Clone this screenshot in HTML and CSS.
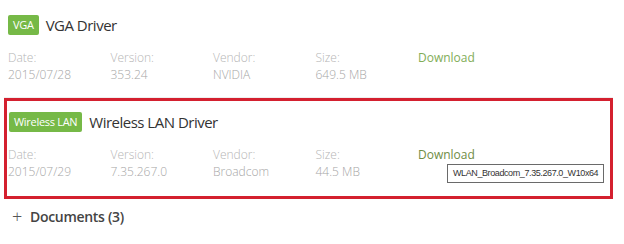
FILE: index.html
```html
<!DOCTYPE html>
<html>
<head>
<meta charset="utf-8">
<link rel="stylesheet" href="styles.css">
</head>
<body>
<div class="page">
  <div class="driver">
    <div class="head">
      <span class="badge">VGA</span>
      <span class="title">VGA Driver</span>
    </div>
    <div class="info">
      <div class="col"><div class="label">Date:</div><div class="value">2015/07/28</div></div>
      <div class="col"><div class="label">Version:</div><div class="value">353.24</div></div>
      <div class="col"><div class="label">Vendor:</div><div class="value">NVIDIA</div></div>
      <div class="col"><div class="label">Size:</div><div class="value">649.5 MB</div></div>
      <div class="col"><a class="download">Download</a></div>
    </div>
  </div>
  <div class="driver highlight">
    <div class="head">
      <span class="badge">Wireless LAN</span>
      <span class="title">Wireless LAN Driver</span>
    </div>
    <div class="info">
      <div class="col"><div class="label">Date:</div><div class="value">2015/07/29</div></div>
      <div class="col"><div class="label">Version:</div><div class="value">7.35.267.0</div></div>
      <div class="col"><div class="label">Vendor:</div><div class="value">Broadcom</div></div>
      <div class="col"><div class="label">Size:</div><div class="value">44.5 MB</div></div>
      <div class="col dl-col"><a class="download dark">Download</a><span class="tooltip">WLAN_Broadcom_7.35.267.0_W10x64</span></div>
    </div>
  </div>
  <div class="docs"><span class="plus">+</span><span>Documents (3)</span></div>
</div>
</body>
</html>
```
FILE: styles.css
```css
html, body { margin: 0; padding: 0; background: #fff; }
body { font-family: "Open Sans", "Noto Sans", sans-serif; width: 624px; height: 244px; overflow: hidden; }
.page { padding: 0 0 0 4px; }
.driver { box-sizing: border-box; width: 609px; height: 98px; padding: 15px 0 0 4px; border-bottom: 1px solid #efefef; }
.highlight { height: 101px; padding: 11px 0 0 1px; border: 3px solid #d4202f; }
.head { display: flex; align-items: center; height: 20px; }
.badge { background: #76b947; color: #fff; font-size: 11px; line-height: 20px; height: 20px; padding: 0 5px; border-radius: 2px; letter-spacing: -0.3px; }
.highlight .badge { margin-left: 1px; }
.title { margin-left: 7px; font-size: 15px; color: #333; font-weight: 500; letter-spacing: -0.5px; }
.info { display: flex; margin-top: 14px; }
.col { width: 102.5px; font-size: 12px; font-weight: 300; line-height: 17px; }
.label { color: #b5b5b5; }
.value { color: #a6a6a6; }
.download { color: #82ad58; font-weight: 400; }
.download.dark { color: #6f8c45; }
.dl-col { position: relative; }
.tooltip { position: absolute; left: 29px; top: 18px; white-space: nowrap; font-family: "Liberation Sans", "Noto Sans", sans-serif; font-size: 9px; font-weight: 400; color: #333; border: 1px solid #6a6a6a; background: #fff; padding: 1px 5px 1px 5px; line-height: 15px; letter-spacing: -0.4px; }
.docs { display: flex; align-items: center; margin-top: 5px; padding-left: 8px; font-size: 14px; color: #444; font-weight: 600; letter-spacing: -0.3px; }
.plus { font-size: 18px; font-weight: 300; margin-right: 8px; color: #555; }
```
